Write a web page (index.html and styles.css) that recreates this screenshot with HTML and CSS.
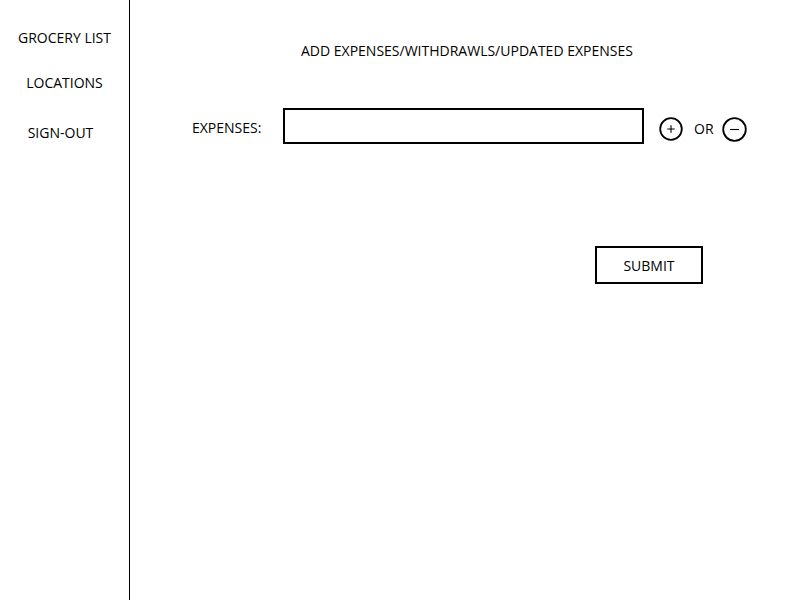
FILE: index.html
```html
<!DOCTYPE html>
<html>
<head>
<meta charset="utf-8">
<link rel="stylesheet" href="styles.css">
</head>
<body>
<div class="app">
  <nav class="sidebar">
    <a class="nav-item nav-grocery">GROCERY LIST</a>
    <a class="nav-item nav-locations">LOCATIONS</a>
    <a class="nav-item nav-signout">SIGN-OUT</a>
  </nav>
  <main class="main">
    <h1 class="title">ADD EXPENSES/WITHDRAWLS/UPDATED EXPENSES</h1>
    <div class="row">
      <label class="label">EXPENSES:</label>
      <div class="input"></div>
      <svg class="circle plus" width="24" height="24" viewBox="0 0 24 24"><circle cx="12" cy="12" r="10.8" fill="none" stroke="#000" stroke-width="1.8"/><path d="M12 8.3v7.4M8.3 12h7.4" stroke="#000" stroke-width="1.1" fill="none"/></svg>
      <span class="or">OR</span>
      <svg class="circle minus" width="25" height="25" viewBox="0 0 25 25"><circle cx="12.5" cy="12.5" r="11.3" fill="none" stroke="#000" stroke-width="1.8"/><path d="M8 12.5h9" stroke="#000" stroke-width="1.1" fill="none"/></svg>
    </div>
    <div class="actions">
      <button class="submit">SUBMIT</button>
    </div>
  </main>
</div>
</body>
</html>
```
FILE: styles.css
```css
html, body { margin: 0; padding: 0; background: #fff; }
body { font-family: "Open Sans", "Liberation Sans", sans-serif; font-size: 14px; color: #000; }
.app { display: flex; width: 800px; height: 600px; }
.sidebar { width: 129px; border-right: 1px solid #000; display: flex; flex-direction: column; align-items: center; padding-top: 28px; box-sizing: content-box; }
.nav-item { display: block; line-height: 20px; }
.nav-locations { margin-top: 25px; }
.nav-signout { margin-top: 30px; margin-right: 8px; }
.main { flex: 1; }
.title { font-size: 14px; font-weight: normal; margin: 41px 0 0 171px; line-height: 20px; }
.row { display: flex; align-items: center; margin-top: 47px; height: 36px; }
.label { margin-left: 62px; width: 91px; position: relative; top: 1px; }
.input { width: 357px; height: 32px; border: 2px solid #000; }
.circle { display: block; flex: none; }
.plus { margin-left: 15px; position: relative; top: 3px; }
.or { margin-left: 11px; position: relative; top: 2px; }
.minus { margin-left: 8px; position: relative; top: 3px; }
.actions { margin-top: 102px; margin-left: 465px; }
.submit { font-family: inherit; font-size: 14px; width: 108px; height: 38px; border: 2px solid #000; background: #fff; padding: 0; color: #000; }
```
